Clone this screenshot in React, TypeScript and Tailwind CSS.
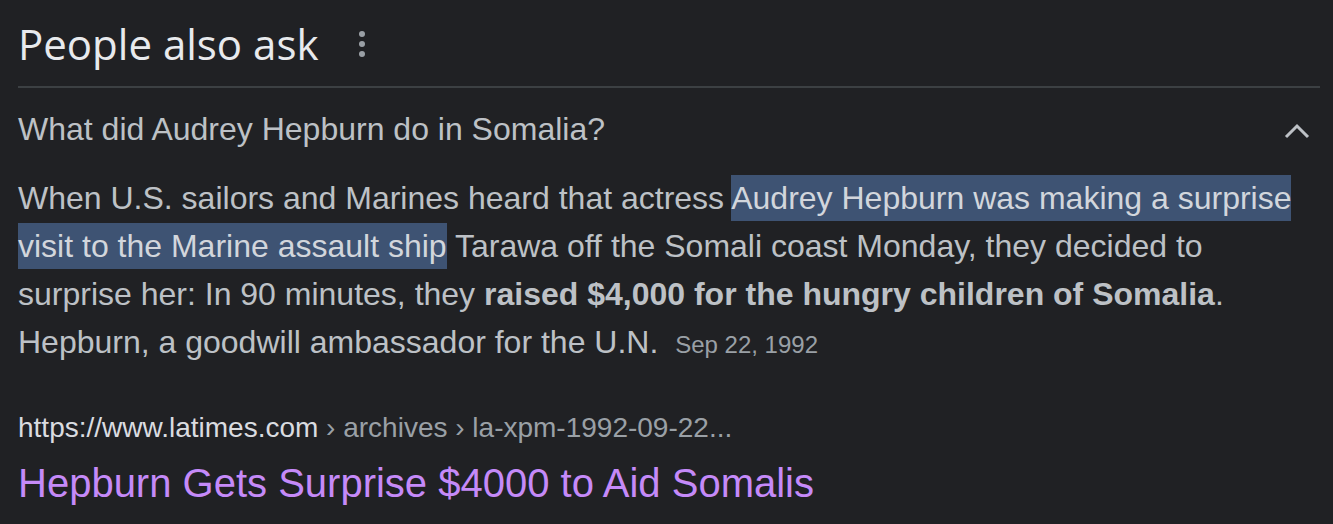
const App = () => {
  return (
    <div className="w-[1333px] h-[524px] overflow-hidden bg-[#202124] pl-[18px] pr-[13px]" style={{ fontFamily: '"Liberation Sans", Arial, sans-serif' }}>
      <div className="flex h-[88px] items-center border-b-2 border-[#3c4043]">
        <h2 className="text-[42px] text-[#e8eaed]" style={{ fontFamily: '"Open Sans", sans-serif' }}>
          People also ask
        </h2>
        <svg className="ml-[40px] mt-[2px]" width="8" height="26" viewBox="0 0 8 26" fill="#9aa0a6">
          <circle cx="4" cy="3" r="3" />
          <circle cx="4" cy="13" r="3" />
          <circle cx="4" cy="23" r="3" />
        </svg>
      </div>

      <div className="flex h-[82px] items-center justify-between pr-[10px]">
        <div className="text-[32px] text-[#bdc1c6]">What did Audrey Hepburn do in Somalia?</div>
        <svg className="mt-[4px]" width="26" height="16" viewBox="0 0 26 16" fill="none" stroke="#bdc1c6" strokeWidth="3">
          <path d="M2 14 L13 3 L24 14" />
        </svg>
      </div>

      <p className="text-[32px] leading-[48px] text-[#bdc1c6] mt-[4px]">
        When U.S. sailors and Marines heard that actress{" "}
        <span className="bg-[#3e5373] text-[#d2d6dc] py-[5px] box-decoration-clone">Audrey Hepburn was making a surprise visit to the Marine assault ship</span>{" "}
        Tarawa off the Somali coast Monday, they decided to surprise her: In 90 minutes, they{" "}
        <b className="font-bold">raised $4,000 for the hungry children of Somalia</b>. Hepburn, a goodwill ambassador for the U.N.{" "}
        <span className="ml-[8px] text-[24px] text-[#9aa0a6]">Sep 22, 1992</span>
      </p>

      <div className="mt-[43px] text-[28px] leading-[32px]">
        <span className="text-[#dadce0]">https://www.latimes.com</span>
        <span className="text-[#9aa0a6]"> › archives › la-xpm-1992-09-22...</span>
      </div>
      <div className="mt-[15px] text-[40px] leading-[48px] text-[#c58af9]">Hepburn Gets Surprise $4000 to Aid Somalis</div>
    </div>
  );
};

export default App;
